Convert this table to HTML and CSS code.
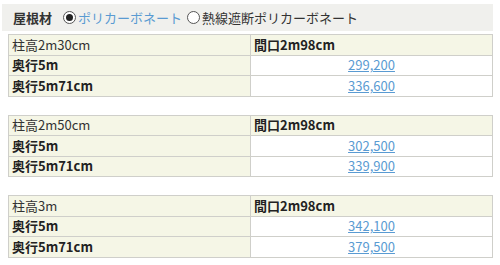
FILE: index.html
```html
<!DOCTYPE html>
<html lang="ja">
<head>
<meta charset="utf-8">
<link rel="stylesheet" href="styles.css">
</head>
<body>
<div class="roof">
  <span class="roof-label">屋根材</span>
  <label class="opt opt-on"><span class="radio radio-on"></span>ポリカーボネート</label>
  <label class="opt"><span class="radio"></span>熱線遮断ポリカーボネート</label>
</div>

<table class="price">
  <tr class="head"><td class="h-left">柱高2m30cm</td><td class="h-right">間口2m98cm</td></tr>
  <tr><th>奥行5m</th><td class="val"><a href="#">299,200</a></td></tr>
  <tr><th>奥行5m71cm</th><td class="val"><a href="#">336,600</a></td></tr>
</table>

<table class="price">
  <tr class="head"><td class="h-left">柱高2m50cm</td><td class="h-right">間口2m98cm</td></tr>
  <tr><th>奥行5m</th><td class="val"><a href="#">302,500</a></td></tr>
  <tr><th>奥行5m71cm</th><td class="val"><a href="#">339,900</a></td></tr>
</table>

<table class="price">
  <tr class="head"><td class="h-left">柱高3m</td><td class="h-right">間口2m98cm</td></tr>
  <tr><th>奥行5m</th><td class="val"><a href="#">342,100</a></td></tr>
  <tr><th>奥行5m71cm</th><td class="val"><a href="#">379,500</a></td></tr>
</table>
</body>
</html>
```
FILE: styles.css
```css
html, body {
  margin: 0;
  padding: 0;
  background: #fff;
}
body {
  font-family: "Noto Sans CJK JP", "Noto Sans", sans-serif;
  font-size: 13px;
  color: #333;
  padding: 4px 7px 0 0;
}
.roof {
  margin-left: 2px;
  height: 27px;
  background: #f0f0ed;
  display: flex;
  align-items: center;
  padding-left: 11px;
  font-size: 13px;
}
.roof-label {
  font-weight: bold;
  margin-right: 11px;
}
.opt {
  display: flex;
  align-items: center;
  color: #333;
  margin-right: 5px;
}
.opt-on {
  color: #5a9bd2;
}
.radio {
  width: 13px;
  height: 13px;
  border: 1px solid #555;
  border-radius: 50%;
  background: #fff;
  margin-right: 2px;
  box-sizing: border-box;
  position: relative;
}
.radio-on::after {
  content: "";
  position: absolute;
  left: 2px;
  top: 2px;
  width: 7px;
  height: 7px;
  border-radius: 50%;
  background: #222;
}
.price {
  margin: 3px 0 18px 8px;
  width: 485px;
  border-collapse: collapse;
  table-layout: fixed;
}
.price + .price {
  margin-top: 0;
}
.price td, .price th {
  border: 1px solid #cfcfca;
  line-height: 18px;
  height: 20.5px;
  box-sizing: border-box;
  padding: 0 3px;
  text-align: left;
  vertical-align: middle;
  background: #f5f6e6;
}
.price th {
  font-weight: bold;
  color: #222;
}
.h-left {
  font-weight: normal;
}
.h-right {
  font-weight: bold;
  color: #222;
}
.price td.val {
  background: #fff;
  text-align: center;
}
.val a {
  color: #5a9bd2;
  text-decoration: underline;
}
```
